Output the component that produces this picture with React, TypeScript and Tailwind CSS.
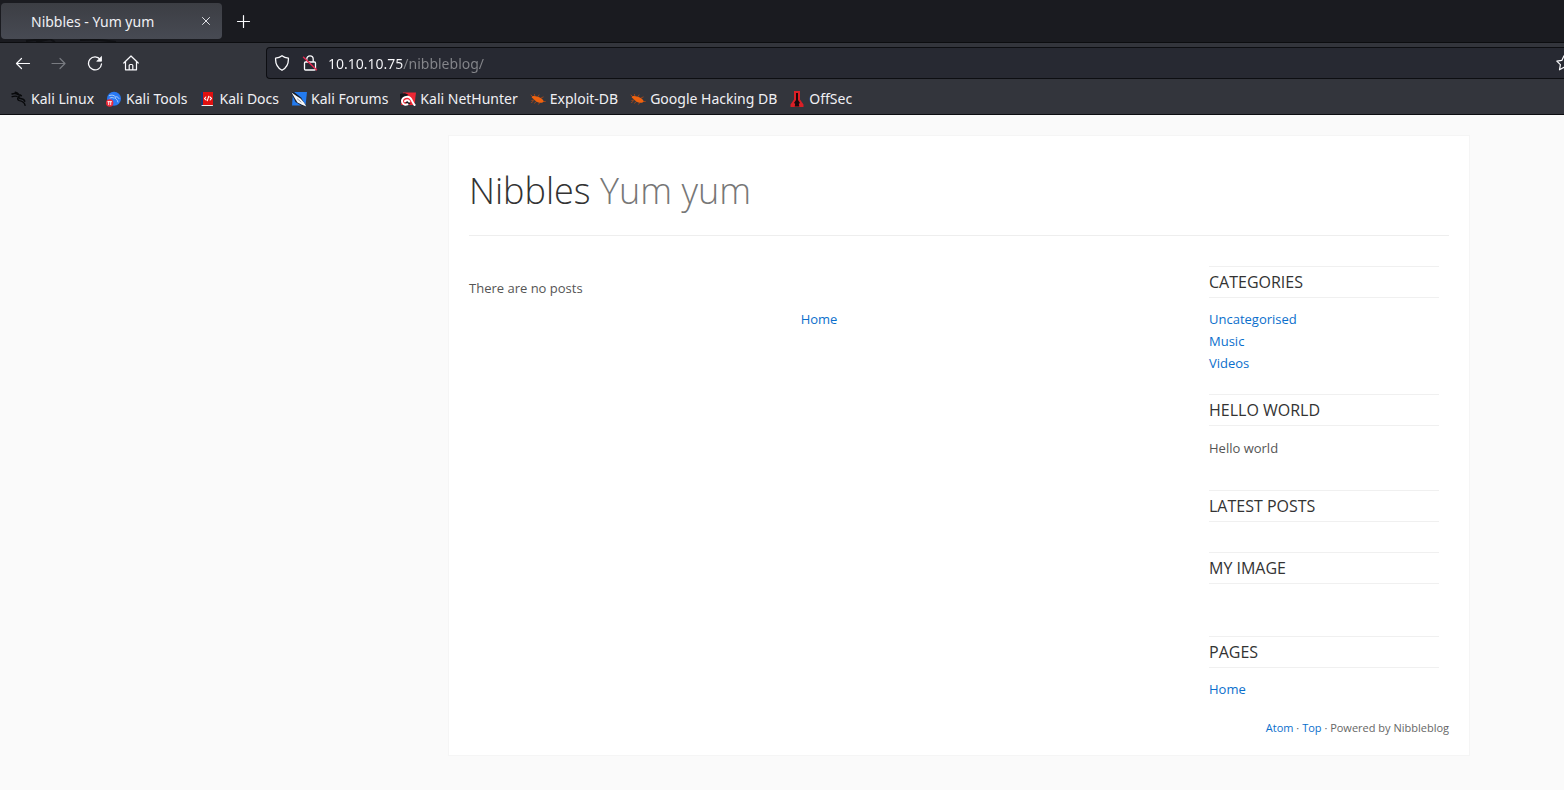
import type { ReactNode } from "react";

type IconProps = { children: ReactNode };

function Icon({ children }: IconProps) {
  return (
    <svg viewBox="0 0 16 16" className="size-4 shrink-0" fill="none" stroke="currentColor" strokeWidth="1.2" strokeLinecap="round" strokeLinejoin="round" aria-hidden="true">
      {children}
    </svg>
  );
}

function Beetle() {
  return (
    <Icon>
      <g stroke="#b04a17" strokeWidth="0.8">
        <path d="M5 5.500 4.500 3.500M8 5.500l1-1.600M11 7l2.200-1M4 9l-2.200.5M6.500 10.500 4.500 12.200M9.500 12l-1 1.300M13 10.500h2.300M2.500 5.500 1 4M3 10.500l-1.500 1" />
      </g>
      <path d="M1.600 6C2.800 4.500 4.800 5 7 5.500c3 .6 5.800 2.500 6.600 4.600.1 1.700-2 2-4.200 1.600C7 11.400 5.400 10 4 8.500 3 7.500 2.100 7.200 1.600 6Z" fill="#ee620f" stroke="none" />
    </Icon>
  );
}

const dragon = "M1 3c2-.8 4.300-.5 6.200.7 1.200-.3 2.400.1 3.200 1-1.100-.2-2 .1-2.500.7-.6.900.200 1.900 1.700 2.100 2.100.3 3.700 1.100 4.200 2.800M1.200 5.700c1.600-.6 3.300-.7 4.800-.3M7.300 6.200c-1.200 1.300-.7 3 1.200 3.400 2.500.4 4.800 1.200 5.600 4.700M4.300 1.300c1.600.2 2.500.9 3.300 1.900";

const bookmarks: { label: string; icon: ReactNode }[] = [
  { label: "Kali Linux", icon: <Icon><path d={dragon} stroke="#08090b" strokeWidth="1.400" /></Icon> },
  {
    label: "Kali Tools",
    icon: (
      <Icon>
        <circle cx="8" cy="7.700" r="7" fill="#2979f2" stroke="none" />
        <path d="M3.500 4.500c2.500-.8 4.500-.3 5.800 1.300 1.800-.2 3 .4 3.700 1.700M9 6.500c-.3 1.500 2.500 1.500 3 4.500M4 7c1.500-.7 3-.6 4 .2" stroke="#b9d6fb" strokeWidth=".9" />
        <circle cx="3.700" cy="12" r="3.700" fill="#ed2939" stroke="none" />
        <path d="M1.800 10.700h3.800M2.700 10.700v3M4.700 10.700v3" stroke="#fff" strokeWidth=".9" />
      </Icon>
    ),
  },
  {
    label: "Kali Docs",
    icon: (
      <Icon>
        <path d="M1 1h2v14H1Z" fill="#18356f" stroke="none" />
        <path d="M3 1h10v13H3Z" fill="#e01010" stroke="none" />
        <path d="M2 14.500h10.500" stroke="#eee" strokeWidth="1" />
        <path d="M5.800 6 4.500 7.500l1.500 1.400M10 6l1.500 1.400L10.200 9M8.800 5.200 7.300 9.700" stroke="#fff" strokeWidth="1.100" />
      </Icon>
    ),
  },
  {
    label: "Kali Forums",
    icon: (
      <Icon>
        <path d="M2 1h14l-1.500 13.500H1Z" fill="#247bee" stroke="none" />
        <path d="M0 1.500 3 1l7 5.500 5.500 9L11 15 4.500 11Z" fill="#1b1e26" stroke="none" />
        <path d="M.5 1.500 5.500 5l4 2.500L13 11.500l2.300 4L11 13.800 6.500 11.500 4 7.500Z" fill="#f4f6f9" stroke="none" />
        <path d="m6.500 8 3.500 3" stroke="#777d88" strokeWidth=".8" />
      </Icon>
    ),
  },
  {
    label: "Kali NetHunter",
    icon: (
      <Icon>
        <path d="M3 1.500h13L14.500 14H1Z" fill="#ee2734" stroke="none" />
        <path d="M0 3c3-1.500 6.500-1 8.500 1L3 8 .5 12Z" fill="#16171b" stroke="none" />
        <path d="M8.500 9.500 5 11l3 3 2.500-1.500Z" fill="#16171b" stroke="none" />
        <path d="M7.500 13.300C4.500 14.500 1.800 12.500 2 9.700 2.300 6.500 7.300 4.500 10 6.800c2 1.700 2 4.200 4.600 7.200M5 10.300c1.500-1.500 3.500-1.300 4.200.2" stroke="#fff" strokeWidth="2" />
      </Icon>
    ),
  },
  { label: "Exploit-DB", icon: <Beetle /> },
  { label: "Google Hacking DB", icon: <Beetle /> },
  {
    label: "OffSec",
    icon: (
      <Icon>
        <path d="M5 0h6v8.500l3.500 5V16h-13v-2.500l3.500-5Z" fill="#d91f26" stroke="none" />
        <path d="M7 2h2v7l2 3-1.200.7.500 2.800H5.700l.5-2.800L5 12l2-3Z" fill="#17090c" stroke="none" />
      </Icon>
    ),
  },
];

function TabStrip() {
  return (
    <div className="relative flex h-[43px] items-center gap-2 border-b border-[#0c0d10] bg-[#1a1b20] pl-px">
      <svg className="absolute top-9 left-5 h-[6px] w-[110px]" viewBox="0 0 110 6" fill="none" stroke="#0f1013" aria-hidden="true">
        <path d="M6 5 25 3M16 6l14-3M30 3l5 3M60 4c14-1 25 0 36 2" strokeWidth="2" />
      </svg>
      <div className="relative flex h-9 w-[221px] items-center rounded bg-linear-to-b from-[#3c3e44] to-[#474a53] pl-[30px] text-[14px] text-[#f0f0f4]">
        <span className="flex-1">Nibbles - Yum yum</span>
        <button type="button" aria-label="Close tab" className="mr-2 text-[#e2e3e8]">
          <Icon><path d="m4.500 4.500 7 7m0-7-7 7" strokeWidth="1" /></Icon>
        </button>
      </div>
      <button type="button" aria-label="New tab" className="ml-1 p-px text-[#fbfbfe]">
        <Icon><path d="M8.500 2.500v12M2.500 8.500h12" /></Icon>
      </button>
    </div>
  );
}

function Toolbar() {
  return (
    <div className="flex h-10 items-center text-[#fbfbfe]">
      <div className="flex w-[266px] shrink-0 items-center gap-5 pl-[15px]">
        <button type="button" aria-label="Back"><Icon><path d="M14.500 8.500h-13M6.500 3.500l-5 5 5 5" /></Icon></button>
        <button type="button" aria-label="Forward" disabled className="text-[#797b81]"><Icon><path d="M1 8.500h13M9 3.500l5 5-5 5" /></Icon></button>
        <button type="button" aria-label="Reload">
          <Icon>
            <path d="M13.300 4.600A6.500 6.500 0 1 0 14.500 9" strokeWidth="1.300" />
            <path d="M14.500 1.800v4.400h-4.400Z" fill="currentColor" strokeWidth=".8" />
          </Icon>
        </button>
        <button type="button" aria-label="Home">
          <Icon><path d="M.800 8 8 1l7.200 7M2.500 6.500v8.300h11V6.500M6.200 14.500v-4q0-1 1-1h1.600q1 0 1 1v4" /></Icon>
        </button>
      </div>
      <div className="flex h-8 min-w-0 flex-1 items-center gap-3 overflow-hidden rounded-l border border-r-0 border-[#0d0e12] bg-[#272932] pl-[7px]">
        <Icon><path d="M8 .700c1.800 1.500 4 2.200 6.400 2.400.3 5.300-1.700 9.600-6.400 12.200C3.300 12.700 1.300 8.400 1.600 3.100 4 2.900 6.200 2.200 8 .700Z" strokeWidth="1.300" /></Icon>
        <Icon>
          <path d="M4.800 7V4a3.200 3.200 0 0 1 6.400 0v3M3.500 7h9q1 0 1 1v6q0 1-1 1h-9q-1 0-1-1V8q0-1 1-1Z" strokeWidth="1.300" />
          <path d="m1.500 2.300 13 12.500" stroke="#e22850" strokeWidth="1.500" />
        </Icon>
        <input
          type="text"
          aria-label="Address"
          defaultValue="10.10.10.75/nibbleblog/"
          className="-ml-0.5 h-full min-w-0 flex-1 bg-[linear-gradient(90deg,#fbfbfe_75px,#85868b_75px)] bg-clip-text text-[14px] text-transparent outline-none"
        />
        <button type="button" aria-label="Bookmark this page" className="-mr-2">
          <Icon><path d="m8 .8 2.200 4.600 5 .7-3.600 3.600.9 5.100L8 12.400l-4.500 2.400.9-5.100L.8 6.100l5-.7Z" /></Icon>
        </button>
      </div>
    </div>
  );
}

function Browser() {
  return (
    <header className="border-b border-[#0c0d10] bg-[#33353c] font-['Noto_Sans',sans-serif]">
      <TabStrip />
      <Toolbar />
      <nav aria-label="Bookmarks" className="flex h-[31px] items-center gap-3 pl-[11px] text-[14px] text-[#f0f0f4]">
        {bookmarks.map((b) => (
          <a key={b.label} href="#" className="flex shrink-0 items-center gap-1 whitespace-nowrap">
            {b.icon}
            {b.label}
          </a>
        ))}
      </nav>
    </header>
  );
}

function Widget({ title, children }: { title: string; children?: ReactNode }) {
  return (
    <section>
      <h2 className="border-y border-[#f0f0f0] text-[16px] leading-[30px] text-[#333] uppercase">{title}</h2>
      {children}
    </section>
  );
}

export default function App() {
  return (
    <div className="flex min-h-screen flex-col bg-[#fafafa]">
      <Browser />
      <div className="ml-auto w-full max-w-[1116px] pt-5 pr-[94px] pb-8 font-['Open_Sans',sans-serif] text-[13px] leading-[22px] text-[#555]">
        <div className="border border-[#f5f5f5] bg-white px-5 pb-4">
          <header className="border-b border-[#eee] pt-[30px] pb-[19px]">
            <h1 className="text-[36px] leading-[50px] font-light text-[#333]">
              Nibbles <span className="text-[#777]">Yum yum</span>
            </h1>
          </header>
          <div className="flex pt-[30px]">
            <main className="w-[700px] shrink">
              <p className="mt-[11px]">There are no posts</p>
              <nav aria-label="Pagination" className="mt-[9px] text-center text-[#0b6fcc]">
                <a href="#">Home</a>
              </nav>
            </main>
            <aside className="mr-[10px] ml-auto w-[230px] shrink-0">
              <Widget title="Categories">
                <ul className="pt-[10px] pb-5 text-[#0b6fcc]">
                  <li><a href="#">Uncategorised</a></li>
                  <li><a href="#">Music</a></li>
                  <li><a href="#">Videos</a></li>
                </ul>
              </Widget>
              <Widget title="Hello world"><p className="pt-[11px] pb-[31px]">Hello world</p></Widget>
              <Widget title="Latest posts"><div className="h-[30px]" /></Widget>
              <Widget title="My image"><div className="h-[52px]" /></Widget>
              <Widget title="Pages">
                <p className="pt-[10px] text-[#0b6fcc]"><a href="#">Home</a></p>
              </Widget>
            </aside>
          </div>
          <footer className="pt-[17px] text-right text-[11px] text-[#666]">
            <a href="#" className="text-[#0b6fcc]">Atom</a> · <a href="#" className="text-[#0b6fcc]">Top</a> · Powered by Nibbleblog
          </footer>
        </div>
      </div>
    </div>
  );
}
